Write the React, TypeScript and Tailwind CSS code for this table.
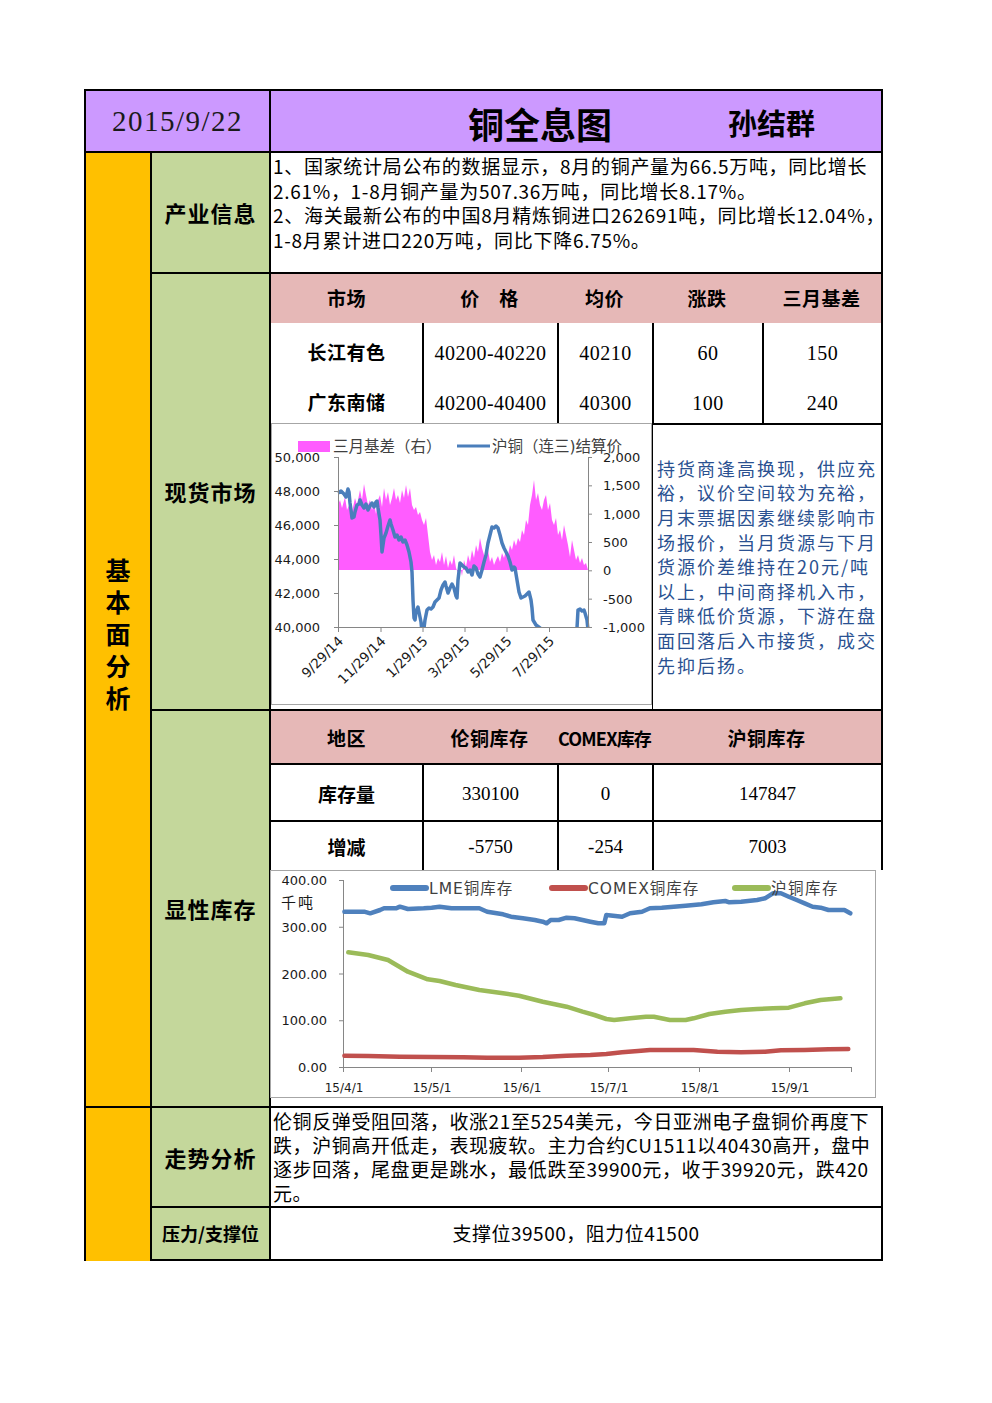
import React from "react";

const serif = "font-['Liberation_Serif',serif]";

// zoom-crop coords -> page coords
const toPts = (arr: number[][], ox: number, oy: number, kx: number, ky: number) =>
  arr.map(([x, y]) => `${(ox + x / kx).toFixed(1)},${(oy + y / ky).toFixed(1)}`).join(" ");

const pinkTop = [
  [338, 505], [340, 500], [342, 508], [345, 497], [347, 510], [350, 503], [352, 512], [355, 498], [357, 505],
  [360, 490], [362, 500], [364, 484], [366, 495], [368, 505], [370, 500], [372, 510], [374, 503], [376, 514],
  [378, 500], [380, 495], [382, 507], [384, 488], [386, 500], [388, 492], [390, 505], [392, 498], [394, 488],
  [396, 500], [398, 495], [400, 503], [402, 490], [404, 498], [406, 485], [408, 497], [410, 488], [412, 505],
  [414, 510], [416, 507], [418, 515], [420, 512], [422, 520], [424, 525], [426, 518], [428, 535], [430, 552],
  [432, 560], [434, 555], [436, 565], [438, 558], [440, 562], [442, 552], [444, 565], [446, 556], [448, 568],
  [450, 560], [452, 565], [454, 555], [456, 568], [458, 573], [460, 565], [462, 576], [464, 560], [466, 567],
  [468, 555], [470, 562], [472, 550], [474, 558], [476, 545], [478, 552], [480, 538], [482, 548], [484, 555],
  [486, 560], [488, 550], [490, 562], [492, 557], [494, 565], [496, 560], [498, 556], [500, 562], [502, 553],
  [504, 558], [506, 550], [508, 555], [510, 545], [512, 550], [514, 540], [516, 546], [518, 538], [520, 542],
  [522, 530], [524, 535], [526, 520], [528, 525], [530, 505], [532, 495], [534, 480], [536, 500], [538, 493],
  [540, 505], [542, 510], [544, 500], [546, 495], [548, 510], [550, 503], [552, 520], [554, 525], [556, 518],
  [558, 535], [560, 530], [562, 540], [564, 525], [566, 535], [568, 545], [570, 557], [572, 540], [574, 550],
  [576, 560], [578, 555], [580, 563], [582, 558], [584, 565], [586, 563], [588, 570],
];

const shfe = [
  [338, 493], [341, 491], [344, 494], [346, 497], [348, 489], [349, 492], [350, 503], [351, 510], [352, 518],
  [354, 517], [355, 512], [357, 505], [359, 504], [360, 500], [362, 505], [364, 508], [366, 504], [368, 510],
  [370, 506], [372, 503], [374, 507], [376, 502], [377, 501], [378, 508], [380, 520], [381, 535], [382, 552],
  [383, 545], [384, 538], [386, 533], [388, 526], [390, 520], [391, 524], [393, 530], [395, 537], [397, 535],
  [399, 540], [401, 537], [403, 542], [405, 540], [407, 545], [409, 552], [411, 562], [412, 572], [413, 600],
  [414, 618], [415, 620], [416, 612], [418, 607], [419, 612], [421, 622], [422, 632], [424, 628], [425, 620],
  [427, 610], [429, 608], [431, 609], [433, 607], [435, 602], [437, 600], [439, 598], [441, 590], [443, 585],
  [445, 582], [446, 586], [448, 593], [450, 588], [452, 584], [454, 588], [456, 596], [457, 598], [458, 580],
  [460, 563], [462, 565], [464, 567], [466, 568], [468, 572], [470, 570], [472, 575], [474, 566], [476, 568],
  [478, 574], [480, 577], [482, 570], [484, 562], [486, 555], [488, 543], [490, 535], [492, 527], [494, 528],
  [496, 526], [498, 528], [500, 535], [502, 543], [504, 548], [506, 552], [508, 556], [510, 562], [512, 570],
  [514, 567], [515, 568], [517, 580], [519, 592], [521, 598], [523, 597], [525, 596], [527, 594], [529, 592],
  [531, 600], [532, 608], [533, 620], [536, 625], [540, 628], [545, 640], [570, 640], [576, 632], [577, 628],
  [578, 610], [580, 609], [582, 611], [584, 610], [585, 613], [587, 620], [588, 630],
];

const lme = [
  [200, 140], [250, 140], [265, 145], [290, 135], [300, 130], [330, 130], [340, 125], [360, 132], [400, 130],
  [420, 128], [440, 125], [470, 130], [500, 130], [540, 130], [560, 140], [600, 148], [620, 155], [650, 160],
  [680, 165], [700, 170], [710, 175], [720, 165], [740, 165], [760, 158], [780, 160], [800, 165], [820, 170],
  [840, 175], [855, 175], [860, 150], [900, 155], [920, 145], [950, 140], [970, 130], [1000, 128], [1030, 125],
  [1060, 122], [1100, 118], [1130, 112], [1160, 108], [1170, 112], [1200, 110], [1240, 105], [1260, 100],
  [1280, 85], [1300, 85], [1320, 95], [1340, 105], [1360, 115], [1380, 125], [1400, 128], [1420, 135],
  [1440, 135], [1460, 135], [1475, 145],
];

const shInv = [
  [210, 262], [260, 270], [310, 285], [360, 320], [410, 343], [440, 348], [480, 360], [540, 375], [600, 385],
  [640, 392], [700, 410], [760, 425], [800, 440], [830, 450], [860, 462], [880, 465], [920, 460], [960, 455],
  [980, 455], [1020, 465], [1060, 465], [1080, 460], [1120, 447], [1160, 440], [1200, 435], [1240, 432],
  [1280, 430], [1320, 428], [1360, 415], [1400, 405], [1450, 400],
];

const comex = [
  [200, 572], [260, 573], [340, 575], [420, 576], [500, 577], [560, 578], [640, 578], [700, 576], [760, 572],
  [820, 570], [860, 567], [900, 562], [940, 558], [970, 555], [1020, 555], [1080, 555], [1140, 560],
  [1200, 562], [1260, 560], [1300, 556], [1360, 555], [1420, 553], [1470, 552],
];

function SpotChart() {
  const leftTicks = ["50,000", "48,000", "46,000", "44,000", "42,000", "40,000"];
  const rightTicks = ["2,000", "1,500", "1,000", "500", "0", "-500", "-1,000"];
  const dates = [
    { x: 338, t: "9/29/14" },
    { x: 380.5, t: "11/29/14" },
    { x: 422.5, t: "1/29/15" },
    { x: 464.5, t: "3/29/15" },
    { x: 506.5, t: "5/29/15" },
    { x: 549, t: "7/29/15" },
  ];
  const area = `338,570 ${pinkTop.map(([x, y]) => `${x},${y}`).join(" ")} 588,570`;
  return (
    <svg width="381" height="282" viewBox="271 423 381 282" className="block">
      <defs>
        <clipPath id="plot1">
          <rect x="336" y="440" width="255" height="188" />
        </clipPath>
      </defs>
      <rect x="271.5" y="423.5" width="380" height="281" fill="#fff" stroke="#a6a6a6" />
      <polygon points={area} fill="#ff5cff" />
      <polyline
        points={shfe.map(([x, y]) => `${x},${y}`).join(" ")}
        fill="none"
        stroke="#4a7ebb"
        strokeWidth="3.5"
        strokeLinejoin="round"
        clipPath="url(#plot1)"
      />
      <g stroke="#868686" strokeWidth="1">
        <line x1="338.5" y1="457" x2="338.5" y2="627" />
        <line x1="588.5" y1="457" x2="588.5" y2="627" />
        <line x1="338" y1="627.5" x2="589" y2="627.5" />
        {leftTicks.map((_, i) => (
          <line key={i} x1="334" x2="338" y1={457.5 + i * 34} y2={457.5 + i * 34} />
        ))}
        {rightTicks.map((_, i) => (
          <line key={i} x1="588" x2="592" y1={457.5 + i * 28.33} y2={457.5 + i * 28.33} />
        ))}
        {dates.map((d) => (
          <line key={d.t} x1={d.x + 0.5} x2={d.x + 0.5} y1="627" y2="632" />
        ))}
      </g>
      <g fontFamily="DejaVu Sans, sans-serif" fontSize="13" fill="#1a1a1a">
        {leftTicks.map((t, i) => (
          <text key={t} x="320" y={462 + i * 34} textAnchor="end">
            {t}
          </text>
        ))}
        {rightTicks.map((t, i) => (
          <text key={t} x="603" y={462 + i * 28.33}>
            {t}
          </text>
        ))}
        {dates.map((d) => (
          <text
            key={d.t}
            x={d.x + 6}
            y="642"
            fontSize="13.5"
            textAnchor="end"
            transform={`rotate(-45 ${d.x + 6} 642)`}
          >
            {d.t}
          </text>
        ))}
      </g>
      <rect x="298" y="441" width="32" height="11" fill="#ff5cff" />
      <line x1="457" y1="446" x2="490" y2="446" stroke="#4a7ebb" strokeWidth="3" />
      <g fontFamily="DejaVu Sans, 'Noto Sans CJK SC', sans-serif" fontSize="15.5" fill="#404040">
        <text x="333" y="452">三月基差（右）</text>
        <text x="492" y="452">沪铜（连三)结算价</text>
      </g>
    </svg>
  );
}

function StockChart() {
  const yTicks = ["400.00", "300.00", "200.00", "100.00", "0.00"];
  const months = [
    { x: 343, t: "15/4/1" },
    { x: 431, t: "15/5/1" },
    { x: 521, t: "15/6/1" },
    { x: 608, t: "15/7/1" },
    { x: 699, t: "15/8/1" },
    { x: 789, t: "15/9/1" },
  ];
  const line = (pts: number[][]) => toPts(pts, 265, 865, 2.52, 3);
  return (
    <svg width="606" height="228" viewBox="270 870 606 228" className="block">
      <rect x="270.5" y="870.5" width="605" height="227" fill="#fff" stroke="#a6a6a6" />
      <g stroke="#868686" strokeWidth="1">
        <line x1="343.5" y1="880" x2="343.5" y2="1067" />
        <line x1="343" y1="1067.5" x2="852" y2="1067.5" />
        {yTicks.map((_, i) => (
          <line key={i} x1="339" x2="343" y1={880.5 + i * 46.75} y2={880.5 + i * 46.75} />
        ))}
        {months.map((m) => (
          <line key={m.t} x1={m.x + 0.5} x2={m.x + 0.5} y1="1067" y2="1072" />
        ))}
        <line x1="851.5" x2="851.5" y1="1067" y2="1072" />
      </g>
      <polyline points={line(shInv)} fill="none" stroke="#9bbb59" strokeWidth="4.5" strokeLinecap="round" strokeLinejoin="round" />
      <polyline points={line(comex)} fill="none" stroke="#c0504d" strokeWidth="4.5" strokeLinecap="round" strokeLinejoin="round" />
      <polyline points={line(lme)} fill="none" stroke="#4f81bd" strokeWidth="4.5" strokeLinecap="round" strokeLinejoin="round" />
      <g fontFamily="DejaVu Sans, 'Noto Sans CJK SC', sans-serif" fill="#1a1a1a">
        {yTicks.map((t, i) => (
          <text key={t} x="327" y={885 + i * 46.75} fontSize="13" textAnchor="end">
            {t}
          </text>
        ))}
        <text x="281" y="908" fontSize="15" letterSpacing="2">千吨</text>
        {months.map((m) => (
          <text key={m.t} x={m.x + 1} y="1092" fontSize="12" textAnchor="middle">
            {m.t}
          </text>
        ))}
      </g>
      <g strokeWidth="6" strokeLinecap="round">
        <line x1="393" y1="888" x2="426" y2="888" stroke="#4f81bd" />
        <line x1="552" y1="888" x2="585" y2="888" stroke="#c0504d" />
        <line x1="735" y1="888" x2="768" y2="888" stroke="#9bbb59" />
      </g>
      <g fontFamily="DejaVu Sans, 'Noto Sans CJK SC', sans-serif" fontSize="15.5" fill="#404040">
        <text x="429" y="894" letterSpacing="1">LME铜库存</text>
        <text x="588" y="894" letterSpacing="1">COMEX铜库存</text>
        <text x="771" y="894" letterSpacing="1.5">沪铜库存</text>
      </g>
    </svg>
  );
}

const label = "flex items-center justify-center bg-[#c4d79b] border-r-2 border-b-2 border-black font-bold text-[22px] tracking-[1px]";
const th = "flex items-center justify-center font-bold text-[19px] tracking-[0.5px] whitespace-nowrap";

export default function App() {
  return (
    <div className="min-h-[1403px] bg-white pl-[84px] pt-[89px] font-['Noto_Sans_CJK_SC',sans-serif] text-black">
      <div className="grid w-fit grid-cols-[66px_119px_612px] grid-rows-[62px_121px_437px_397px_100px_53px] border-l-2 border-t-2 border-black">
        {/* header */}
        <div className={`col-span-2 col-start-1 row-start-1 flex items-center justify-center border-b-2 border-r-2 border-black bg-[#cc99ff] pt-[2px] text-[29px] tracking-[1.5px] text-[#1a1a1a] ${serif}`}>
          2015/9/22
        </div>
        <div className="col-start-3 row-start-1 flex items-center border-b-2 border-r-2 border-black bg-[#cc99ff] pt-[3px]">
          <span className="ml-[197px] text-[36px] font-bold leading-none">铜全息图</span>
          <span className="ml-[116px] text-[29px] font-bold leading-none">孙结群</span>
        </div>

        {/* left band */}
        <div className="col-start-1 row-span-3 row-start-2 flex items-center justify-center border-b-2 border-r-2 border-black bg-[#ffc000]">
          <div className="flex flex-col items-center pt-[6px] text-[25px] font-bold leading-[32px]">
            <span className="h-[32px]">基</span>
            <span className="h-[32px]">本</span>
            <span className="h-[32px]">面</span>
            <span className="h-[32px]">分</span>
            <span className="h-[32px]">析</span>
          </div>
        </div>
        <div className="col-start-1 row-span-2 row-start-5 border-r-2 border-black bg-[#ffc000]" />

        {/* 产业信息 */}
        <div className={`col-start-2 row-start-2 ${label}`}>产业信息</div>
        <div className="col-start-3 row-start-2 border-b-2 border-r-2 border-black pl-[2px] pt-[1px] text-[19px] leading-[24.5px] tracking-[0.7px] whitespace-nowrap">
          <div>1、国家统计局公布的数据显示，8月的铜产量为66.5万吨，同比增长</div>
          <div>2.61%，1-8月铜产量为507.36万吨，同比增长8.17%。</div>
          <div>2、海关最新公布的中国8月精炼铜进口262691吨，同比增长12.04%，</div>
          <div>1-8月累计进口220万吨，同比下降6.75%。</div>
        </div>

        {/* 现货市场 */}
        <div className={`col-start-2 row-start-3 ${label}`}>现货市场</div>
        <div className="col-start-3 row-start-3 flex flex-col border-b-2 border-r-2 border-black">
          <div className="flex h-[49px] bg-[#e6b8b7]">
            <div className={`w-[151px] ${th}`}>市场</div>
            <div className={`w-[135px] ${th}`}>价　格</div>
            <div className={`w-[95px] ${th}`}>均价</div>
            <div className={`w-[110px] ${th}`}>涨跌</div>
            <div className={`flex-1 ${th}`}>三月基差</div>
          </div>
          {[
            ["长江有色", "40200-40220", "40210", "60", "150"],
            ["广东南储", "40200-40400", "40300", "100", "240"],
          ].map((r) => (
            <div key={r[0]} className={`flex h-[50px] text-[20px] tracking-[0.5px] ${serif}`}>
              <div className="flex w-[151px] items-center justify-center pt-[9px] font-['Noto_Sans_CJK_SC',sans-serif] text-[19px] font-bold">
                {r[0]}
              </div>
              <div className="flex w-[135px] items-center justify-center border-l-2 border-black pt-[9px]">{r[1]}</div>
              <div className="flex w-[95px] items-center justify-center border-l-2 border-black pt-[9px]">{r[2]}</div>
              <div className="flex w-[110px] items-center justify-center border-l-2 border-black pt-[9px]">{r[3]}</div>
              <div className="flex flex-1 items-center justify-center border-l-2 border-black pt-[9px]">{r[4]}</div>
            </div>
          ))}
          <div className="flex flex-1">
            <SpotChart />
            <div className="flex flex-1 items-center border-l border-t-2 border-black pl-[4px] text-[18px] leading-[24.6px] tracking-[2px] whitespace-nowrap text-[#2a5191]">
              <div className="-mt-[1px]">
                <div>持货商逢高换现，供应充</div>
                <div>裕，议价空间较为充裕，</div>
                <div>月末票据因素继续影响市</div>
                <div>场报价，当月货源与下月</div>
                <div>货源价差维持在20元/吨</div>
                <div>以上，中间商择机入市，</div>
                <div>青睐低价货源，下游在盘</div>
                <div>面回落后入市接货，成交</div>
                <div>先抑后扬。</div>
              </div>
            </div>
          </div>
        </div>

        {/* 显性库存 */}
        <div className={`col-start-2 row-start-4 ${label}`}>显性库存</div>
        <div className="col-start-3 row-start-4 flex flex-col border-b-2 border-black">
          <div className="w-[612px] border-r-2 border-black">
            <div className="flex h-[54px] border-b-2 border-black bg-[#e6b8b7] pt-[3px]">
              <div className={`w-[151px] ${th}`}>地区</div>
              <div className={`w-[135px] ${th}`}>伦铜库存</div>
              <div className="flex w-[95px] items-center justify-center whitespace-nowrap text-[18px] font-bold tracking-[-0.8px]">
                COMEX库存
              </div>
              <div className={`flex-1 ${th}`}>沪铜库存</div>
            </div>
            {[
              ["库存量", "330100", "0", "147847"],
              ["增减", "-5750", "-254", "7003"],
            ].map((r, i) => (
              <div
                key={r[0]}
                className={`flex ${i === 0 ? "h-[57px] border-b-2 border-black" : "h-[48px]"} text-[19px] ${serif}`}
              >
                <div className="flex w-[151px] items-center justify-center pt-[3px] font-['Noto_Sans_CJK_SC',sans-serif] font-bold">
                  {r[0]}
                </div>
                <div className="flex w-[135px] items-center justify-center border-l-2 border-black pt-[3px]">{r[1]}</div>
                <div className="flex w-[95px] items-center justify-center border-l-2 border-black pt-[3px]">{r[2]}</div>
                <div className="flex flex-1 items-center justify-center border-l-2 border-black pt-[3px]">{r[3]}</div>
              </div>
            ))}
          </div>
          <div className="-ml-px">
            <StockChart />
          </div>
        </div>

        {/* 走势分析 */}
        <div className={`col-start-2 row-start-5 ${label}`}>走势分析</div>
        <div className="col-start-3 row-start-5 border-b-2 border-r-2 border-black pl-[2px] pt-[1px] text-[19px] leading-[24px] tracking-[0.6px] whitespace-nowrap">
          <div>伦铜反弹受阻回落，收涨21至5254美元，今日亚洲电子盘铜价再度下</div>
          <div>跌，沪铜高开低走，表现疲软。主力合约CU1511以40430高开，盘中</div>
          <div>逐步回落，尾盘更是跳水，最低跌至39900元，收于39920元，跌420</div>
          <div>元。</div>
        </div>

        {/* 压力/支撑位 */}
        <div className="col-start-2 row-start-6 flex items-center justify-center border-b-2 border-r-2 border-black bg-[#c4d79b] text-[18px] font-bold">
          压力/支撑位
        </div>
        <div className="col-start-3 row-start-6 flex items-center justify-center border-b-2 border-r-2 border-black text-[19px] tracking-[0.5px]">
          支撑位39500，阻力位41500
        </div>
      </div>
    </div>
  );
}
